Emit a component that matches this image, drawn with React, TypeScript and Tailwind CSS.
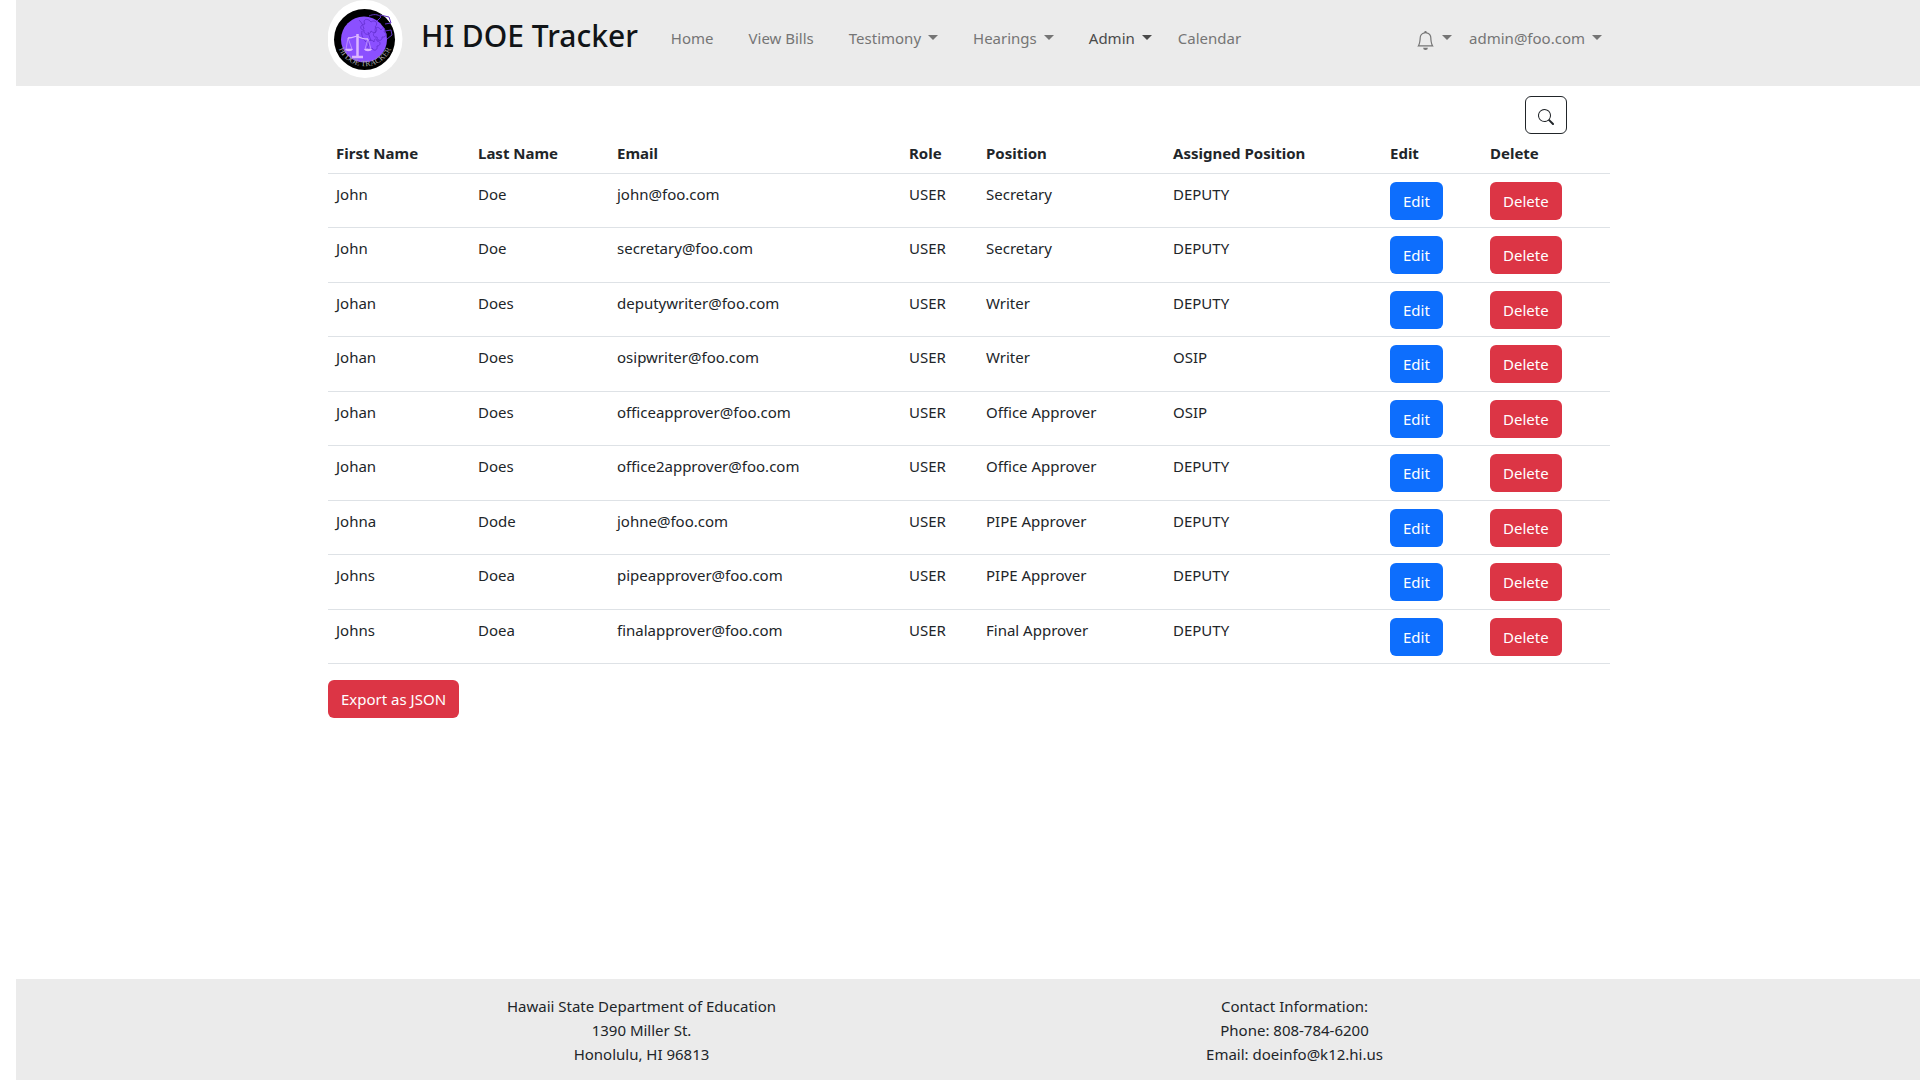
import React from "react";
import { BsBell, BsSearch } from "react-icons/bs";

type User = {
  first: string;
  last: string;
  email: string;
  role: string;
  position: string;
  assigned: string;
};

const users: User[] = [
  { first: "John", last: "Doe", email: "john@foo.com", role: "USER", position: "Secretary", assigned: "DEPUTY" },
  { first: "John", last: "Doe", email: "secretary@foo.com", role: "USER", position: "Secretary", assigned: "DEPUTY" },
  { first: "Johan", last: "Does", email: "deputywriter@foo.com", role: "USER", position: "Writer", assigned: "DEPUTY" },
  { first: "Johan", last: "Does", email: "osipwriter@foo.com", role: "USER", position: "Writer", assigned: "OSIP" },
  { first: "Johan", last: "Does", email: "officeapprover@foo.com", role: "USER", position: "Office Approver", assigned: "OSIP" },
  { first: "Johan", last: "Does", email: "office2approver@foo.com", role: "USER", position: "Office Approver", assigned: "DEPUTY" },
  { first: "Johna", last: "Dode", email: "johne@foo.com", role: "USER", position: "PIPE Approver", assigned: "DEPUTY" },
  { first: "Johns", last: "Doea", email: "pipeapprover@foo.com", role: "USER", position: "PIPE Approver", assigned: "DEPUTY" },
  { first: "Johns", last: "Doea", email: "finalapprover@foo.com", role: "USER", position: "Final Approver", assigned: "DEPUTY" },
];

const columns = [
  { label: "First Name", width: "w-[142px]" },
  { label: "Last Name", width: "w-[139px]" },
  { label: "Email", width: "w-[292px]" },
  { label: "Role", width: "w-[77px]" },
  { label: "Position", width: "w-[187px]" },
  { label: "Assigned Position", width: "w-[217px]" },
  { label: "Edit", width: "w-[100px]" },
  { label: "Delete", width: "w-[128px]" },
];

function Caret() {
  return (
    <span
      aria-hidden="true"
      className="mb-0.5 ml-[7px] inline-block border-x-[5px] border-t-[5px] border-x-transparent border-t-current"
    />
  );
}

function Logo() {
  return (
    <svg viewBox="0 0 76 78" className="h-[78px] w-[76px] shrink-0" role="img" aria-label="HI DOE Tracker logo">
      <defs>
        <path id="rim" d="M9 43 A28.5 28.5 0 0 0 65 43" />
      </defs>
      <ellipse cx="37" cy="39" rx="37.5" ry="39" fill="#fff" />
      <circle cx="36.5" cy="39.5" r="30.5" fill="#000" />
      <circle cx="36" cy="39.5" r="23" fill="#8b50ff" />
      <g fill="none" stroke="#6a35d8" strokeWidth="1">
        <path d="M43 22c-4-5-9-2-6 2-5 0-6 6-1 6-1 5 6 6 7 1 4 4 8-1 4-4 4-4 0-8-4-5z" />
        <path d="M53 30c-3-5-8-2-5 2-4 1-3 6 1 5 0 5 6 4 5 0 4 1 6-4 2-5 2-4-1-6-3-2z" />
        <path d="M46 42c-3-4-8-1-5 3-3 2 0 6 3 3 2 4 6 2 5-2 4 0 4-5 0-5 0-3-3-3-3 1z" />
        <path d="M31 20c3 3 4 5 5 9M40 32l3 9M34 31c-1 4 1 8 4 11" />
      </g>
      <g fill="none" stroke="#6032c4" strokeWidth="1">
        <path d="M41 16c4-2 9-2 12 1l-4 4M52 15l9 2 2 6-6 1M57 31l6-1 1 5-5 4" />
      </g>
      <g stroke="#dcb6ff" fill="#dcb6ff">
        <path d="M29.500 34v22M24 57h11" strokeWidth="2.500" fill="none" />
        <path d="M20 38c4 0 6-1 9-2 3 2 6 3 11 3" strokeWidth="1.300" fill="none" />
        <path d="M20 38l-2 11h6zM40 39l-3 10h6z" strokeWidth=".6" fill="none" />
        <path d="M17 49h8c-1 3-7 3-8 0zM36 49h8c-1 3-7 3-8 0z" stroke="none" />
      </g>
      <text fontSize="8" fill="#a8a8a8" fontFamily="Liberation Serif, serif">
        <textPath href="#rim" startOffset="50%" textAnchor="middle">
          HI DOE TRACKER
        </textPath>
      </text>
    </svg>
  );
}

function Header() {
  return (
    <header className="bg-[#ebebeb] pl-0.5">
      <div className="mx-auto flex h-[86px] max-w-[1282px] items-start">
        <a href="#" className="flex text-[#111417]">
          <Logo />
          <span className="ml-[17px] pt-[14px] text-[30px] leading-[44px] font-medium">HI DOE Tracker</span>
        </a>
        <nav aria-label="Main" className="ml-[33px] flex pt-[26px] whitespace-nowrap text-[#757575]">
          <a href="#" className="mr-[35px]">Home</a>
          <a href="#" className="mr-[35px]">View Bills</a>
          <button type="button" className="mr-[35px] flex items-center">Testimony<Caret /></button>
          <button type="button" className="mr-[35px] flex items-center">Hearings<Caret /></button>
          <button type="button" className="mr-[26px] flex items-center text-[#4a4a4a]">Admin<Caret /></button>
          <a href="#">Calendar</a>
        </nav>
        <div className="ml-auto flex pt-[26px] pr-2 text-[#757575]">
          <button type="button" aria-label="Notifications" className="mr-[17px] flex items-center">
            <BsBell className="mt-1 size-[19px]" />
            <Caret />
          </button>
          <button type="button" className="flex items-center">admin@foo.com<Caret /></button>
        </div>
      </div>
    </header>
  );
}

function UserTable() {
  return (
    <table className="w-full table-fixed border-collapse text-left">
      <thead>
        <tr className="border-b border-[#dee2e6]">
          {columns.map((c) => (
            <th key={c.label} scope="col" className={`${c.width} px-2 pt-[7px] pb-2 font-bold`}>
              {c.label}
            </th>
          ))}
        </tr>
      </thead>
      <tbody>
        {users.map((u) => (
          <tr key={u.email} className="h-[54px] border-b border-[#dee2e6] align-top even:h-[55px]">
            <td className="px-2 pt-2">{u.first}</td>
            <td className="px-2 pt-2">{u.last}</td>
            <td className="px-2 pt-2">{u.email}</td>
            <td className="px-2 pt-2">{u.role}</td>
            <td className="px-2 pt-2">{u.position}</td>
            <td className="px-2 pt-2">{u.assigned}</td>
            <td className="px-2 pt-2">
              <button type="button" className="block h-[38px] rounded-md bg-[#0d6efd] px-[13px] text-white">Edit</button>
            </td>
            <td className="px-2 pt-2">
              <button type="button" className="block h-[38px] rounded-md bg-[#dc3545] px-[13px] text-white">Delete</button>
            </td>
          </tr>
        ))}
      </tbody>
    </table>
  );
}

export default function App() {
  return (
    <div className="flex min-h-screen flex-col bg-white pl-4 font-['Noto_Sans','Open_Sans',sans-serif] text-[15px] leading-6 text-[#212529]">
      <Header />
      <div className="flex-1 pl-0.5">
        <main className="mx-auto w-full max-w-[1282px] pt-[10px]">
          <div className="flex justify-end pr-[43px]">
            <button
              type="button"
              aria-label="Search"
              className="flex h-[38px] w-[42px] items-center justify-center rounded-md border border-[#212529]"
            >
              <BsSearch className="mt-1 size-4" />
            </button>
          </div>
          <UserTable />
          <button type="button" className="mt-4 block h-[38px] rounded-md bg-[#dc3545] px-[13px] text-white">
            Export as JSON
          </button>
        </main>
      </div>
      <footer className="bg-[#ebebeb]">
        <div className="mx-auto grid max-w-[1306px] grid-cols-2 pt-[15px] pb-[14px] text-center">
          <address className="not-italic">
            Hawaii State Department of Education
            <br />
            1390 Miller St.
            <br />
            Honolulu, HI 96813
          </address>
          <address className="not-italic">
            Contact Information:
            <br />
            Phone: 808-784-6200
            <br />
            Email: doeinfo@k12.hi.us
          </address>
        </div>
      </footer>
    </div>
  );
}
